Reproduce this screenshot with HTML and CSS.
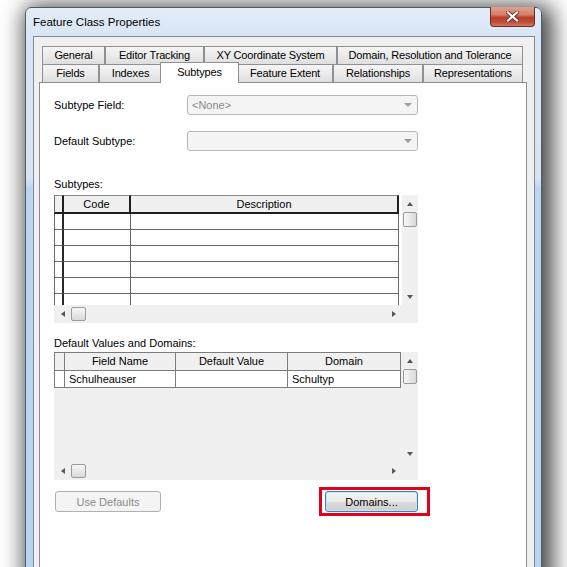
FILE: index.html
```html
<!DOCTYPE html>
<html>
<head>
<meta charset="utf-8">
<title>Feature Class Properties</title>
<link rel="stylesheet" href="styles.css">
</head>
<body>
<div class="desk">
  <div class="window">
    <div class="titlebar">
      <span class="title">Feature Class Properties</span>
      <div class="close">
        <svg width="13" height="11" viewBox="0 0 13 11">
          <path d="M2 1.5 L11 9.5 M11 1.5 L2 9.5" stroke="#5a2a22" stroke-width="3.8" stroke-linecap="square"/>
          <path d="M2 1.5 L11 9.5 M11 1.5 L2 9.5" stroke="#ffffff" stroke-width="2.2" stroke-linecap="square"/>
        </svg>
      </div>
    </div>
    <div class="client">
      <div class="tabs">
        <div class="tabrow">
          <div class="tab w-general">General</div>
          <div class="tab w-editor">Editor Tracking</div>
          <div class="tab w-xy">XY Coordinate System</div>
          <div class="tab w-domain">Domain, Resolution and Tolerance</div>
        </div>
        <div class="tabrow">
          <div class="tab w-fields">Fields</div>
          <div class="tab w-indexes">Indexes</div>
          <div class="tab w-subtypes selected">Subtypes</div>
          <div class="tab w-extent">Feature Extent</div>
          <div class="tab w-rel">Relationships</div>
          <div class="tab w-rep">Representations</div>
        </div>
      </div>
      <div class="panel">
        <div class="field">
          <span class="label">Subtype Field:</span>
          <div class="combo"><span class="combo-text">&lt;None&gt;</span><span class="combo-arrow"></span></div>
        </div>
        <div class="field second">
          <span class="label">Default Subtype:</span>
          <div class="combo"><span class="combo-text"></span><span class="combo-arrow"></span></div>
        </div>

        <div class="section-label first-section">Subtypes:</div>
        <div class="grid">
          <div class="grid-body">
            <div class="g1-row g1-head">
              <div class="c sel hc1"></div>
              <div class="c code hc1">Code</div>
              <div class="c desc hc1">Description</div>
            </div>
            <div class="g1-row"><div class="c sel bs1"></div><div class="c code bc1"></div><div class="c desc bc1"></div></div>
            <div class="g1-row"><div class="c sel bs1"></div><div class="c code bc1"></div><div class="c desc bc1"></div></div>
            <div class="g1-row"><div class="c sel bs1"></div><div class="c code bc1"></div><div class="c desc bc1"></div></div>
            <div class="g1-row"><div class="c sel bs1"></div><div class="c code bc1"></div><div class="c desc bc1"></div></div>
            <div class="g1-row"><div class="c sel bs1"></div><div class="c code bc1"></div><div class="c desc bc1"></div></div>
            <div class="g1-row"><div class="c sel bs1"></div><div class="c code bc1"></div><div class="c desc bc1"></div></div>
          </div>
          <div class="vscroll">
            <div class="arrow-box"><span class="tri-up"></span></div>
            <div class="vthumb"></div>
            <div class="spacer"></div>
            <div class="arrow-box"><span class="tri-down"></span></div>
          </div>
          <div class="hscroll">
            <div class="harrow-box"><span class="tri-left"></span></div>
            <div class="hthumb"></div>
            <div class="spacer"></div>
            <div class="harrow-box"><span class="tri-right"></span></div>
          </div>
          <div class="corner"></div>
        </div>

        <div class="section-label second-section">Default Values and Domains:</div>
        <div class="grid grid2">
          <div class="grid-body gray">
            <div class="g2-row g2-head">
              <div class="c sel2 hc2"></div>
              <div class="c fname hc2">Field Name</div>
              <div class="c dval hc2">Default Value</div>
              <div class="c dom hc2">Domain</div>
            </div>
            <div class="g2-row">
              <div class="c sel2 bc2 first"></div>
              <div class="c fname bc2 left">Schulheauser</div>
              <div class="c dval bc2"></div>
              <div class="c dom bc2 left">Schultyp</div>
            </div>
          </div>
          <div class="vscroll">
            <div class="arrow-box"><span class="tri-up"></span></div>
            <div class="vthumb"></div>
            <div class="spacer"></div>
            <div class="arrow-box"><span class="tri-down"></span></div>
          </div>
          <div class="hscroll">
            <div class="harrow-box"><span class="tri-left"></span></div>
            <div class="hthumb"></div>
            <div class="spacer"></div>
            <div class="harrow-box"><span class="tri-right"></span></div>
          </div>
          <div class="corner"></div>
        </div>

        <div class="buttons">
          <div class="btn disabled">Use Defaults</div>
          <div class="highlight">
            <div class="btn default">Domains...</div>
          </div>
        </div>
      </div>
    </div>
  </div>
</div>
</body>
</html>
```

FILE: styles.css
```css
html, body {
  margin: 0;
  padding: 0;
  height: 100%;
  overflow: hidden;
  background: #ffffff;
  font-family: "Liberation Sans", Arial, sans-serif;
  font-size: 11px;
  color: #000;
}

.desk {
  padding: 7px 0 0 25px;
}

.window {
  width: 517px;
  height: 620px;
  box-sizing: border-box;
  border: 1px solid #4e5a68;
  border-radius: 6px 6px 0 0;
  background: linear-gradient(180deg, #e3edf8 0, #d8e5f4 28px, #d6e4f4 170px, #bcd6f1 180px, #b8d3f0 100%);
  box-shadow: 5px 4px 22px 6px rgba(0, 0, 0, 0.72);
  display: flex;
  flex-direction: column;
}

.titlebar {
  height: 28px;
  flex: none;
  display: flex;
  justify-content: space-between;
  align-items: flex-start;
}

.title {
  padding-left: 7px;
  line-height: 28px;
  font-size: 11.5px;
  color: #000;
}

.close {
  margin-top: -1px;
  margin-right: 6px;
  width: 45px;
  height: 20px;
  box-sizing: border-box;
  border: 1px solid #6b2a22;
  border-top: none;
  border-radius: 0 0 4px 4px;
  background: linear-gradient(180deg, #e2a090 0, #d47e6c 40%, #bb3f2b 55%, #c24c36 80%, #d27a64 100%);
  display: flex;
  align-items: center;
  justify-content: center;
}

.close svg {
  display: block;
}

.client {
  flex: 1;
  margin: 0 6px 0 7px;
  border: 1px solid #7f8b99;
  border-bottom: none;
  background: #f0f0f0;
  padding: 9px 7px 0 5px;
  display: flex;
  flex-direction: column;
}

.tabs {
  padding: 0 3px;
  display: flex;
  flex-direction: column;
}

.tabrow {
  display: flex;
  height: 18px;
}

.tab {
  box-sizing: border-box;
  height: 18px;
  border: 1px solid #8e9096;
  border-bottom: none;
  background: linear-gradient(180deg, #f5f5f5 0, #ebebeb 50%, #dedede 100%);
  text-align: center;
  line-height: 17px;
  letter-spacing: -0.15px;
  white-space: nowrap;
}

.w-general { width: 63px; }
.w-editor { width: 99px; }
.w-xy { width: 133px; }
.w-domain { width: 186px; }
.w-fields { width: 57px; }
.w-indexes { width: 63px; }
.w-subtypes { width: 79px; }
.w-extent { width: 96px; }
.w-rel { width: 90px; }
.w-rep { width: 100px; }

.tab.selected {
  position: relative;
  z-index: 2;
  height: 21px;
  margin: -2px -2px 0 -2px;
  background: #ffffff;
  line-height: 18px;
}

.panel {
  flex: 1;
  border: 1px solid #898c95;
  background: #ffffff;
  padding: 12px 0 0 14px;
}

.field {
  display: flex;
  align-items: center;
  height: 20px;
}

.field.second {
  margin-top: 16px;
}

.label {
  width: 133px;
  font-size: 11px;
}

.combo {
  width: 231px;
  height: 20px;
  box-sizing: border-box;
  border: 1px solid #b4b7bb;
  border-radius: 3px;
  background: #f4f4f4;
  display: flex;
  align-items: center;
  justify-content: space-between;
  padding: 0 5px 0 4px;
}

.combo-text {
  color: #8a8a8a;
}

.combo-arrow {
  width: 0;
  height: 0;
  border-left: 4px solid transparent;
  border-right: 4px solid transparent;
  border-top: 4px solid #9c9c9c;
}

.section-label {
  line-height: 14px;
}

.first-section {
  margin-top: 26px;
}

.second-section {
  margin-top: 13px;
}

.grid {
  margin-top: 4px;
  width: 364px;
  height: 128px;
  display: grid;
  grid-template-columns: 348px 16px;
  grid-template-rows: 110px 18px;
  background: #f0f0f0;
}

.grid2 {
  margin-top: 2px;
}

.grid-body {
  overflow: hidden;
  background: #ffffff;
}

.grid-body.gray {
  background: #f0f0f0;
}

.g1-row, .g2-row {
  display: flex;
  height: 16px;
}

.g1-row.g1-head, .g2-row.g2-head {
  height: 19px;
}

.g2-row {
  height: 17px;
}

.c {
  box-sizing: border-box;
  height: 100%;
  flex: none;
  white-space: nowrap;
  overflow: hidden;
}

.sel { width: 10px; }
.code { width: 67px; }
.desc { width: 268px; }

.sel2 { width: 11px; }
.fname { width: 111px; }
.dval { width: 112px; }
.dom { width: 113px; }

.hc1 {
  background: #f0f0f0;
  border-top: 1px solid #8a8a8a;
  border-right: 2px solid #1e1e1e;
  border-bottom: 2px solid #1e1e1e;
  text-align: center;
  line-height: 16px;
}

.hc1.sel {
  border-left: 1px solid #6a6a6a;
}

.bs1 {
  background: #ffffff;
  border-left: 1px solid #6a6a6a;
  border-right: 2px solid #2a2a2a;
  border-bottom: 1px solid #6a6a6a;
}

.bc1 {
  background: #ffffff;
  border-right: 1px solid #6a6a6a;
  border-bottom: 1px solid #6a6a6a;
}

.hc2 {
  background: #f0f0f0;
  border-top: 1px solid #7c7c7c;
  border-right: 1px solid #7c7c7c;
  border-bottom: 1px solid #7c7c7c;
  text-align: center;
  line-height: 17px;
}

.hc2.sel2 {
  border-left: 1px solid #7c7c7c;
}

.bc2 {
  background: #ffffff;
  border-right: 1px solid #7c7c7c;
  border-bottom: 1px solid #7c7c7c;
  line-height: 16px;
}

.bc2.first {
  border-left: 1px solid #7c7c7c;
}

.bc2.left {
  padding-left: 4px;
}

.vscroll {
  background: #f0f0f0;
  display: flex;
  flex-direction: column;
}

.arrow-box {
  height: 17px;
  flex: none;
  display: flex;
  align-items: center;
  justify-content: center;
}

.spacer {
  flex: 1;
}

.vthumb {
  flex: none;
  height: 15px;
  width: 14px;
  margin-left: 1px;
  box-sizing: border-box;
  border: 1px solid #9b9b9b;
  border-radius: 2px;
  background: linear-gradient(90deg, #f6f6f6 0, #e8e8e8 50%, #d9d9d9 100%);
}

.hscroll {
  background: #f0f0f0;
  display: flex;
  align-items: center;
}

.harrow-box {
  width: 17px;
  height: 18px;
  flex: none;
  display: flex;
  align-items: center;
  justify-content: center;
}

.hthumb {
  flex: none;
  width: 15px;
  height: 14px;
  box-sizing: border-box;
  border: 1px solid #9b9b9b;
  border-radius: 2px;
  background: linear-gradient(180deg, #f6f6f6 0, #e8e8e8 50%, #d9d9d9 100%);
}

.corner {
  background: #f0f0f0;
}

.tri-up, .tri-down, .tri-left, .tri-right {
  width: 0;
  height: 0;
}

.tri-up {
  border-left: 3px solid transparent;
  border-right: 3px solid transparent;
  border-bottom: 4px solid #555555;
}

.tri-down {
  border-left: 3px solid transparent;
  border-right: 3px solid transparent;
  border-top: 4px solid #555555;
}

.tri-left {
  border-top: 3px solid transparent;
  border-bottom: 3px solid transparent;
  border-right: 4px solid #555555;
}

.tri-right {
  border-top: 3px solid transparent;
  border-bottom: 3px solid transparent;
  border-left: 4px solid #555555;
}

.buttons {
  margin-top: 7px;
  display: flex;
  align-items: center;
}

.btn {
  height: 21px;
  box-sizing: border-box;
  border-radius: 3px;
  display: flex;
  align-items: center;
  justify-content: center;
}

.btn.disabled {
  margin-left: 1px;
  width: 106px;
  border: 1px solid #adb2b5;
  background: #f4f4f4;
  color: #8b8b8b;
}

.highlight {
  margin-left: 158px;
  border: 3px solid #e2001a;
  padding: 1px 9px 1px 3px;
}

.btn.default {
  width: 93px;
  border: 1px solid #3c7fb1;
  background: linear-gradient(180deg, #f3f3f3 0, #ebebeb 50%, #dddddd 51%, #cfcfcf 100%);
  box-shadow: inset 0 0 0 1px #bfe6fb;
}
```
